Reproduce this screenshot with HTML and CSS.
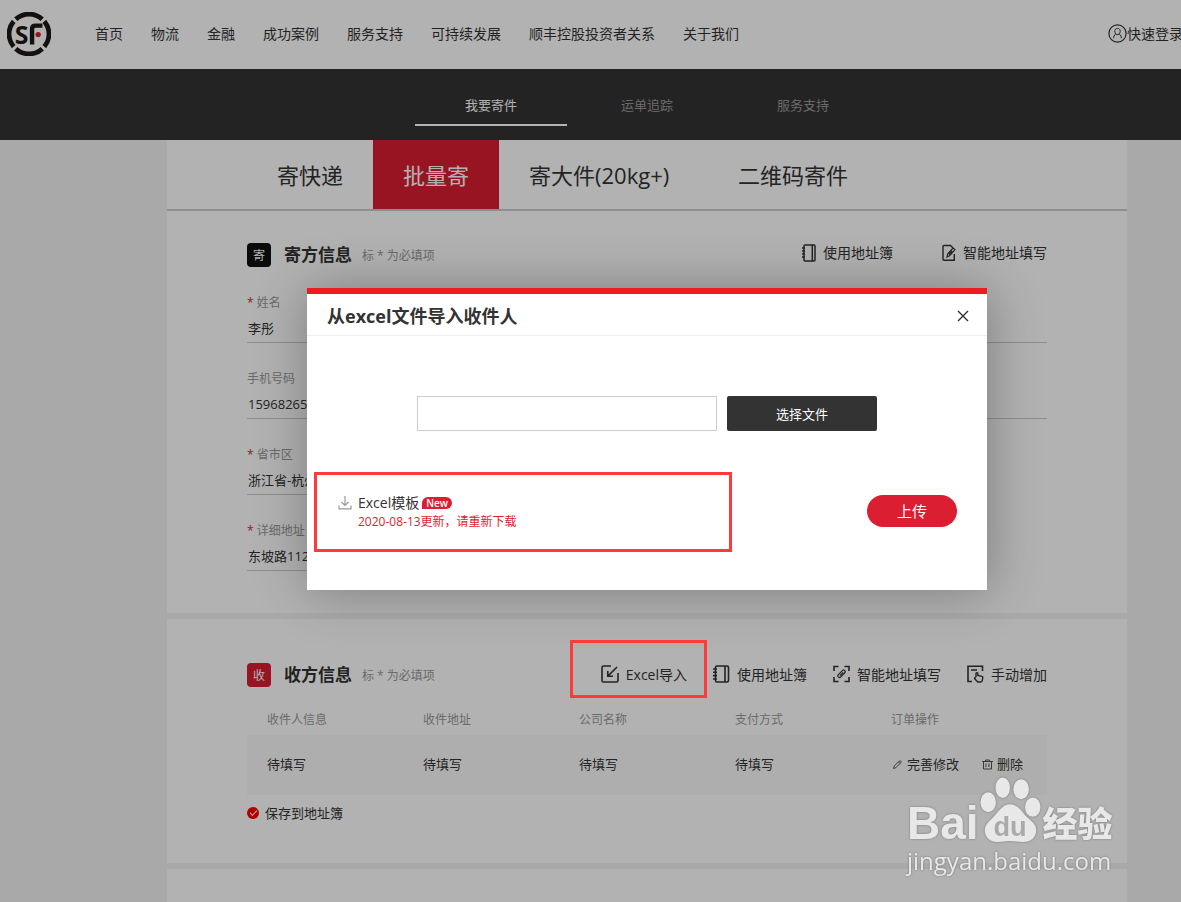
FILE: index.html
```html
<!DOCTYPE html>
<html lang="zh-CN">
<head>
<meta charset="utf-8">
<meta name="viewport" content="width=device-width, initial-scale=1">
<title>批量寄</title>
<link rel="stylesheet" href="styles.css">
</head>
<body>
<div class="page">
  <header class="site-header">
    <a class="logo" href="#" aria-label="SF">
      <svg width="44" height="44" viewBox="0 0 46 46" aria-hidden="true">
        <g fill="none" stroke="#1e1713" stroke-width="5">
          <path d="M9.200 7.600A20.300 20.300 0 0 1 36.800 7.600"/>
          <path d="M39 9.800A20.300 20.300 0 0 1 39 36.200"/>
          <path d="M36.800 38.400A20.300 20.300 0 0 1 9.200 38.400"/>
          <path d="M7 36.200A20.300 20.300 0 0 1 7 9.800"/>
        </g>
        <text class="logo-letter" x="8" y="33.500">S</text>
        <path d="M26.200 34V17.500Q26.200 14.200 30 14.200H37" fill="none" stroke="#1e1713" stroke-width="4.600"/>
        <circle cx="32.600" cy="23.600" r="2.800" fill="#dc1e32"/>
      </svg>
    </a>
    <nav class="main-nav">
      <a href="#">首页</a><a href="#">物流</a><a href="#">金融</a><a href="#">成功案例</a><a href="#">服务支持</a><a href="#">可持续发展</a><a href="#">顺丰控股投资者关系</a><a href="#">关于我们</a>
    </nav>
    <a class="login" href="#">
      <svg width="19" height="19" viewBox="0 0 19 19" fill="none" stroke="#333" aria-hidden="true">
        <circle cx="9.500" cy="9.500" r="8.600" stroke-width="1.200"/>
        <path d="M7.600 9.600C6.300 8 6.400 4.400 9.500 4.400S12.700 8 11.400 9.600M7.600 9.400c.4 1.300-2 1.300-2 4.800M11.400 9.400c-.4 1.300 2 1.300 2 4.800M7.800 10.200q1.700 1 3.400 0"/>
      </svg>快速登录</a>
  </header>

  <nav class="sub-nav">
    <a class="sub-link is-active" href="#">我要寄件</a>
    <a class="sub-link" href="#">运单追踪</a>
    <a class="sub-link" href="#">服务支持</a>
  </nav>

  <main class="content">
    <nav class="tabs">
      <a class="tab" href="#">寄快递</a>
      <a class="tab is-active" href="#">批量寄</a>
      <a class="tab tab-large" href="#">寄大件(20kg+)</a>
      <a class="tab" href="#">二维码寄件</a>
    </nav>

    <section class="card sender">
      <div class="card-head">
        <span class="mark mark-black">寄</span>
        <h2 class="card-title">寄方信息</h2>
        <span class="hint">标 * 为必填项</span>
        <div class="tools tools-wide">
          <button class="tool" type="button">
            <svg width="14" height="18" viewBox="0 0 14 18" fill="none" stroke="#333" stroke-width="1.500" aria-hidden="true"><rect x="2" y="1" width="11" height="16" rx="1"/><path d="M10.300 1v16M0 4h3M0 7h3M0 10h3M0 13h3"/></svg>使用地址簿</button>
          <button class="tool" type="button">
            <svg width="14" height="18" viewBox="0 0 14 18" fill="none" stroke="#333" stroke-width="1.400" aria-hidden="true"><path d="M12.300 10V16.300H2Q1 16.300 1 15.300V2.500Q1 1.500 2 1.500H8.500L11 4"/><path stroke-width="1.200" d="M5 13l.6-3L11 4l2 1.600L7.500 11.800zM7 10.500l3.200-3.600"/></svg>智能地址填写</button>
        </div>
      </div>
      <form class="fields">
        <label class="field"><span class="field-label"><i class="star">*</i> 姓名</span><input class="field-input" type="text" value="李彤"></label>
        <label class="field"><span class="field-label" aria-label="公司"></span><input class="field-input" type="text"></label>
        <label class="field"><span class="field-label">手机号码</span><input class="field-input" type="text" value="15968265"></label>
        <label class="field"><span class="field-label" aria-label="电话"></span><input class="field-input" type="text"></label>
        <label class="field field-first"><span class="field-label"><i class="star">*</i> 省市区</span><input class="field-input" type="text" value="浙江省-杭州"></label>
        <label class="field field-first"><span class="field-label"><i class="star">*</i> 详细地址</span><input class="field-input" type="text" value="东坡路112"></label>
      </form>
    </section>

    <section class="card receiver">
      <div class="card-head">
        <span class="mark mark-red">收</span>
        <h2 class="card-title">收方信息</h2>
        <span class="hint">标 * 为必填项</span>
        <div class="tools">
          <button class="tool tool-marked" type="button">
            <svg class="raised" width="18" height="18" viewBox="0 0 18 18" fill="none" stroke="#333" stroke-width="1.600" aria-hidden="true"><path d="M10 1H2.500Q1 1 1 2.500V15.500Q1 17 2.500 17H15.500Q17 17 17 15.500V8M16 2L7 11M6.800 6v5.200H12"/></svg>Excel导入</button>
          <button class="tool" type="button">
            <svg class="raised" width="17" height="18" viewBox="0 0 17 18" fill="none" stroke="#333" stroke-width="1.600" aria-hidden="true"><rect x="2.500" y="1" width="13" height="16" rx="1.500"/><path d="M12 1v16M0 4h4M0 7.300h4M0 10.600h4M0 14h4"/></svg>使用地址簿</button>
          <button class="tool" type="button">
            <svg class="raised" width="17" height="18" viewBox="0 0 17 18" fill="none" stroke="#333" stroke-width="1.600" aria-hidden="true"><path d="M1 6V1.500H5.500M11.500 1.500H16V6M16 12v4.500h-4.500M5.500 16.500H1V12"/><path stroke-width="1.200" d="M5 10.200L9.800 5.200Q10.600 4.600 11.400 5.400L12 6Q12.700 6.800 12 7.500L7.300 12.300Q6.500 13 5.700 12.200L5.200 11.800Q4.400 11 5 10.200zM7 10.700l3.200-3.300"/></svg>智能地址填写</button>
          <button class="tool" type="button">
            <svg class="raised" width="17" height="18" viewBox="0 0 17 18" fill="none" stroke="#333" stroke-width="1.600" aria-hidden="true"><path d="M5 16.500H1V1.200H15.500V6M4 5h6"/><path stroke-width="1.400" d="M9 12V8.200q.9-1 1.800 0V10.500l4.200.9q1 .3.800 1.400l-.7 3q-.3 1.200-1.600 1.200H10.800L7.500 13.500q.2-1.300 1.500-.7"/></svg>手动增加</button>
        </div>
      </div>
      <table class="orders">
        <thead>
          <tr><th>收件人信息</th><th>收件地址</th><th>公司名称</th><th>支付方式</th><th>订单操作</th></tr>
        </thead>
        <tbody>
          <tr>
            <td>待填写</td><td>待填写</td><td>待填写</td><td>待填写</td>
            <td>
              <div class="row-actions">
                <button class="row-action" type="button"><svg width="12" height="11" viewBox="0 0 12 11" fill="none" stroke="#555" aria-hidden="true"><path d="M2.500 9.500L3.300 7 8.300 2q.8-.6 1.500.1t.1 1.500L4.900 8.700zM7.500 3l1.500 1.500"/></svg>完善修改</button>
                <button class="row-action" type="button"><svg width="11" height="11" viewBox="0 0 11 11" fill="none" stroke="#555" aria-hidden="true"><path d="M0 2.500h11M3.500 2.500v-1.500h4v1.500M1.500 2.500V10h8V2.500M4 4.500v3.500M7 4.500v3.500"/></svg>删除</button>
              </div>
            </td>
          </tr>
        </tbody>
      </table>
      <label class="save"><input class="save-box" type="checkbox" checked>保存到地址簿</label>
    </section>

    <section class="card rest"></section>
  </main>

  <div class="overlay">
    <div class="modal" role="dialog" aria-labelledby="modal-title">
      <div class="modal-head">
        <h3 class="modal-title" id="modal-title">从excel文件导入收件人</h3>
        <button class="close" type="button" aria-label="关闭">
          <svg width="12" height="12" viewBox="0 0 12 12" stroke="#2d3037" stroke-width="1.400" aria-hidden="true"><path d="M1 1l10 10M11 1L1 11"/></svg>
        </button>
      </div>
      <div class="picker">
        <input class="file-name" type="text" aria-label="文件名">
        <button class="choose" type="button">选择文件</button>
      </div>
      <div class="modal-foot">
        <div class="template">
          <svg class="template-icon" width="14" height="15" viewBox="0 0 14 15" fill="none" stroke="#999" stroke-width="1.200" aria-hidden="true"><path d="M7 1v9.500M3.500 7L7 10.500 10.500 7M1 10.500v3.300h12v-3.300"/></svg>
          <div>
            <div class="template-line"><a class="template-link" href="#">Excel模板</a><span class="new">New</span></div>
            <p class="template-note">2020-08-13更新，请重新下载</p>
          </div>
        </div>
        <button class="upload" type="button">上传</button>
      </div>
    </div>
  </div>
</div>

<div class="watermark">
  <div class="wm-top">
    <span class="wm-bai">Bai</span>
    <svg class="wm-paw" width="62" height="66" viewBox="0 0 64 68" aria-hidden="true">
      <g fill="#e8e8e8">
        <ellipse cx="9.500" cy="26" rx="8" ry="10.300"/>
        <ellipse cx="24.500" cy="11" rx="7.500" ry="10.500"/>
        <ellipse cx="43.500" cy="12.500" rx="8" ry="10.300"/>
        <ellipse cx="55.500" cy="31" rx="8" ry="10"/>
        <path d="M32 28c8 0 12 7 16 12 5 5 11 8 11 15 0 8-6 12-13 12-5 0-9-1-14-1s-8 1-13 1C12 67 6 63 6 55c0-7 6-10 10-15 5-6 9-12 16-12z"/>
      </g>
      <text class="wm-du" x="32" y="61" text-anchor="middle">du</text>
    </svg>
    <span class="wm-cn">经验</span>
  </div>
  <div class="wm-url">jingyan.baidu.com</div>
</div>
</body>
</html>
```

FILE: styles.css
```css
* { box-sizing: border-box; }

body {
  margin: 0;
  overflow-x: hidden;
  background: #f2f2f2;
  color: #333;
  font: 14px/20px "Open Sans", "Noto Sans CJK SC", sans-serif;
}

a { color: inherit; text-decoration: none; }
h2, h3, p { margin: 0; }
svg { flex: none; display: block; }

button, input { font: inherit; color: inherit; }
button { padding: 0; border: 0; background: none; cursor: pointer; }

.page {
  position: relative;
  display: flex;
  flex-direction: column;
  min-width: 1294px;
  min-height: 100vh;
}

/* header */
.site-header {
  display: flex;
  align-items: center;
  height: 69px;
  padding: 0 111px 2px 7px;
  background: #fff;
}
.logo { margin-right: 44px; }
.logo-letter { font: bold 26px "Open Sans", sans-serif; fill: #1e1713; }
.main-nav { display: flex; gap: 28px; }
.login { display: flex; align-items: center; margin-left: auto; }

.sub-nav {
  display: flex;
  justify-content: center;
  gap: 4px;
  height: 71px;
  padding-top: 17px;
  background: #333;
}
.sub-link {
  width: 152px;
  height: 40px;
  border-bottom: 2px solid transparent;
  color: #999;
  font-size: 13px;
  line-height: 38px;
  text-align: center;
}
.sub-link.is-active { border-color: #fff; color: #fff; }

/* content */
.content {
  display: flex;
  flex-direction: column;
  flex: 1;
  gap: 6px;
  width: 960px;
  margin: 0 auto;
}
.tabs {
  display: flex;
  margin-bottom: -6px;
  padding-left: 80px;
  border-bottom: 2px solid #ccc;
  background: #fff;
}
.tab { height: 69px; padding: 0 30px; font-size: 22px; line-height: 71px; }
.tab-large { min-width: 209px; }
.tab.is-active { background: #dc1e32; color: #fff; }

.card { padding: 32px 80px 0; background: #fff; }
.sender { height: 402px; }
.receiver { padding: 44px 80px 38px; }
.rest { flex: 1; }

.card-head { display: flex; align-items: center; height: 24px; }
.mark {
  width: 24px;
  height: 24px;
  border-radius: 4px;
  color: #fff;
  font-size: 12px;
  line-height: 25px;
  text-align: center;
}
.mark-black { background: #111; }
.mark-red { background: #dc1e32; }
.card-title { margin: 0 10px 0 13px; font-size: 17px; line-height: 24px; }
.hint { padding-top: 2px; color: #999; font-size: 12px; }
.tools { display: flex; gap: 26px; margin-left: auto; }
.tools-wide { gap: 49px; padding-bottom: 4px; }
.tool { display: flex; align-items: center; gap: 7px; }
.raised { margin-bottom: 3px; }
.tool-marked { position: relative; }
.tool-marked::after {
  content: "";
  position: absolute;
  z-index: 30;
  inset: -25px -20px -12px -31px;
  border: 3px solid #ff3a3a;
}

.fields {
  display: grid;
  grid-template-columns: 380px 380px;
  justify-content: space-between;
  row-gap: 28px;
  margin-top: 28px;
}
.field { display: flex; flex-direction: column; height: 48px; }
.field-first { grid-column: 1; }
.field-label { height: 16px; color: #999; font-size: 12px; line-height: 16px; }
.star { color: #dc1e32; font-style: normal; }
.field-input {
  width: 100%;
  height: 32px;
  padding: 2px 0 0 1px;
  border: 0;
  border-bottom: 1px solid #ccc;
  background: none;
  font-size: 13px;
  outline: 0;
}

.orders {
  width: 100%;
  margin-top: 16px;
  border-collapse: collapse;
  table-layout: fixed;
}
.orders th, .orders td { padding: 0; text-align: left; }
.orders th { height: 32px; padding-top: 2px; color: #999; font-size: 12px; font-weight: 400; }
.orders td { height: 60px; padding-bottom: 2px; font-size: 13px; background: #fafafa; }
.orders th:first-child, .orders td:first-child { width: 176px; padding-left: 20px; }
.row-actions { display: flex; gap: 23px; }
.row-action { display: flex; align-items: center; gap: 4px; }

.save { display: flex; align-items: center; gap: 6px; margin-top: 7px; padding-bottom: 1px; font-size: 13px; line-height: 22px; }
.save-box {
  appearance: none;
  display: grid;
  place-items: center;
  width: 12px;
  height: 12px;
  margin: 0;
  border-radius: 50%;
  background: #f00;
}
.save-box::after {
  content: "";
  width: 6px;
  height: 3px;
  margin-bottom: 2px;
  border: solid #fff;
  border-width: 0 0 1px 1px;
  transform: rotate(-45deg);
}

/* import dialog */
.overlay {
  position: absolute;
  z-index: 10;
  inset: 0;
  padding-top: 288px;
  background: rgba(0, 0, 0, .3);
}
.modal {
  width: 680px;
  margin: 0 auto;
  padding-bottom: 38px;
  border-top: 6px solid #ed1c24;
  background: #fff;
  box-shadow: 1px 1px 50px rgba(0, 0, 0, .3);
}
.modal-head {
  display: flex;
  align-items: center;
  justify-content: space-between;
  height: 42px;
  padding: 2px 18px 0 20px;
  border-bottom: 1px solid #eee;
}
.modal-title { font-size: 18px; line-height: 24px; }
.picker { display: flex; align-items: center; gap: 10px; padding: 60px 110px 41px; }
.file-name {
  flex: 1;
  min-width: 0;
  height: 35px;
  border: 1px solid #ccc;
  background: #fff;
}
.choose {
  width: 150px;
  height: 35px;
  border-radius: 2px;
  background: #333;
  color: #fff;
  font-size: 13px;
}
.modal-foot {
  display: flex;
  align-items: center;
  justify-content: space-between;
  padding: 0 30px 0 7px;
}
.template {
  display: flex;
  gap: 6px;
  width: 418px;
  height: 80px;
  padding: 18px 21px;
  border: 3px solid #ff3a3a;
}
.template-icon { margin-top: 2px; }
.template-line { display: flex; align-items: center; gap: 3px; }
.new {
  padding: 0 4px;
  border-radius: 6px 6px 6px 0;
  background: #dc1e32;
  color: #fff;
  font-size: 10px;
  font-weight: 600;
  line-height: 12px;
}
.template-note { color: #dc1e32; font-size: 12px; line-height: 18px; }
.upload {
  width: 90px;
  height: 32px;
  margin-bottom: 2px;
  border-radius: 16px;
  background: #dc1e32;
  color: #fff;
  font-size: 15px;
}

/* watermark */
.watermark {
  position: fixed;
  z-index: 20;
  right: 64px;
  bottom: 24px;
  color: #e8e8e8;
  filter: drop-shadow(0 0 1px #777);
}
.wm-top { display: flex; align-items: flex-end; width: 210px; height: 68px; }
.wm-bai { font: bold 46px/42px "Liberation Sans", sans-serif; }
.wm-paw { margin-bottom: 1px; }
.wm-du { font: bold 28px "Liberation Sans", sans-serif; fill: #aaa; }
.wm-cn { padding: 0 0 4px 2px; font: 900 35px/36px "Noto Sans CJK SC", sans-serif; }
.wm-url { font-size: 24px; line-height: 34px; }
```
